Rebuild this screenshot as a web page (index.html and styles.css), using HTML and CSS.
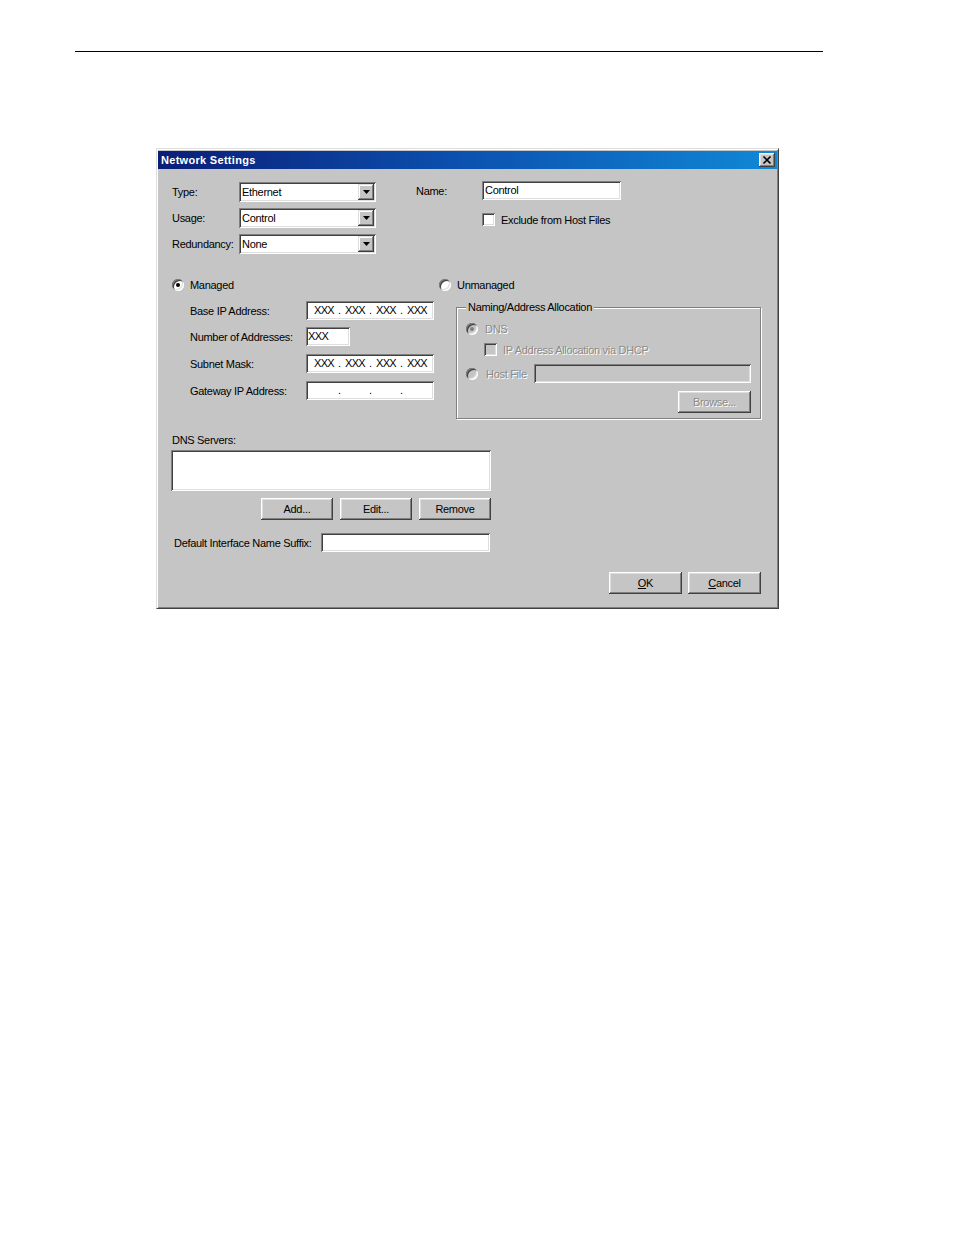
FILE: index.html
```html
<!DOCTYPE html>
<html>
<head>
<meta charset="utf-8">
<title>Network Settings</title>
<link rel="stylesheet" href="styles.css">
</head>
<body>
<div class="rule"></div>
<div class="dialog">
  <div class="titlebar">
    <span class="title">Network Settings</span>
    <span class="close"><svg width="16" height="14" viewBox="0 0 16 14"><path d="M4.5 3.5 L11.5 10.5 M11.5 3.5 L4.5 10.5" stroke="#000" stroke-width="1.7" fill="none"/></svg></span>
  </div>
  <div class="client">
    <div class="sec-top">
      <div class="col-left">
        <div class="row"><span class="lbl-a">Type:</span><div class="combo"><span class="val">Ethernet</span><span class="drop"><svg width="7" height="4" viewBox="0 0 7 4"><polygon points="0,0 7,0 3.5,4" fill="#000"/></svg></span></div></div>
        <div class="row"><span class="lbl-a">Usage:</span><div class="combo"><span class="val">Control</span><span class="drop"><svg width="7" height="4" viewBox="0 0 7 4"><polygon points="0,0 7,0 3.5,4" fill="#000"/></svg></span></div></div>
        <div class="row"><span class="lbl-a">Redundancy:</span><div class="combo"><span class="val">None</span><span class="drop"><svg width="7" height="4" viewBox="0 0 7 4"><polygon points="0,0 7,0 3.5,4" fill="#000"/></svg></span></div></div>
      </div>
      <div class="col-right">
        <div class="row name-row"><span class="lbl-b">Name:</span><div class="field name">Control</div></div>
        <div class="check-row"><span class="check"></span><span>Exclude from Host Files</span></div>
      </div>
    </div>

    <div class="sec-mid">
      <div class="col-managed">
        <div class="radio-row"><span class="radio on"></span><span>Managed</span></div>
        <div class="frow first"><span class="flbl">Base IP Address:</span><div class="field ip"><span class="g">XXX</span><span class="d">.</span><span class="g">XXX</span><span class="d">.</span><span class="g">XXX</span><span class="d">.</span><span class="g">XXX</span></div></div>
        <div class="frow n"><span class="flbl">Number of Addresses:</span><div class="field num"><span class="g">XXX</span></div></div>
        <div class="frow"><span class="flbl">Subnet Mask:</span><div class="field ip"><span class="g">XXX</span><span class="d">.</span><span class="g">XXX</span><span class="d">.</span><span class="g">XXX</span><span class="d">.</span><span class="g">XXX</span></div></div>
        <div class="frow"><span class="flbl">Gateway IP Address:</span><div class="field ip"><span class="g"></span><span class="d">.</span><span class="g"></span><span class="d">.</span><span class="g"></span><span class="d">.</span><span class="g"></span></div></div>
      </div>
      <div class="col-unmanaged">
        <div class="radio-row"><span class="radio"></span><span>Unmanaged</span></div>
        <fieldset class="group">
          <legend>Naming/Address Allocation</legend>
          <div class="radio-row g-dns"><span class="radio dis on"></span><span class="disabled">DNS</span></div>
          <div class="check-row g-dhcp"><span class="check dis"></span><span class="disabled">IP Address Allocation via DHCP</span></div>
          <div class="host-row"><span class="radio dis"></span><span class="disabled host-lbl">Host File</span><div class="field dis host"></div></div>
          <div class="browse-row"><span class="btn disabled">Browse...</span></div>
        </fieldset>
      </div>
    </div>

    <div class="sec-dns">
      <div class="dns-lbl">DNS Servers:</div>
      <div class="field listbox"></div>
      <div class="dns-btns"><span class="btn w72">Add...</span><span class="btn w72">Edit...</span><span class="btn w72">Remove</span></div>
    </div>

    <div class="suffix-row"><span>Default Interface Name Suffix:</span><div class="field suffix"></div></div>

    <div class="dlg-buttons"><span class="btn"><u>O</u>K</span><span class="btn"><u>C</u>ancel</span></div>
  </div>
</div>
</body>
</html>
```

FILE: styles.css
```css
* { box-sizing: border-box; }
body {
  margin: 0;
  background: #fff;
  font-family: "Liberation Sans", Arial, sans-serif;
  font-size: 11px;
  letter-spacing: -0.3px;
  color: #000;
}
.rule { margin: 51px 0 0 75px; width: 748px; height: 1px; background: #000; }

.dialog {
  margin: 96px 0 0 156px;
  width: 623px;
  height: 461px;
  background: #c5c5c5;
  border: 1px solid;
  border-color: #dedede #404040 #404040 #dedede;
  box-shadow: inset 1px 1px #fff, inset -1px -1px #808080;
  padding: 2px 1px 1px;
}
.titlebar {
  height: 18px;
  background: linear-gradient(90deg, #0a1e78 0%, #0c52b0 50%, #1088d6 100%);
  display: flex;
  align-items: center;
  justify-content: space-between;
  padding: 0 2px 0 3px;
}
.title { color: #fff; font-weight: bold; letter-spacing: 0.3px; line-height: 18px; }
.close {
  width: 16px; height: 14px; display: flex;
  background: #c5c5c5;
  box-shadow: inset -1px -1px #404040, inset 1px 1px #fff, inset -2px -2px #808080, inset 2px 2px #dedede;
}

/* sunken controls */
.field, .combo, .check, .radio {
  background: #fff;
  box-shadow: inset 1px 1px #808080, inset -1px -1px #fff, inset 2px 2px #404040, inset -2px -2px #dedede;
}
.field { height: 19px; line-height: 19px; }
.field.dis, .check.dis, .radio.dis { background: #c5c5c5; }

.btn {
  display: flex; align-items: center; justify-content: center;
  width: 73px; height: 22px;
  background: #c5c5c5;
  box-shadow: inset -1px -1px #404040, inset 1px 1px #fff, inset -2px -2px #808080, inset 2px 2px #dedede;
}
.btn.w72 { width: 72px; }
.disabled { color: #8a8a8a; text-shadow: 1px 1px 0 #fff; }

/* top section */
.sec-top { display: flex; margin: 13px 0 0 14px; }
.col-left { width: 244px; display: flex; flex-direction: column; gap: 6px; }
.row { display: flex; align-items: center; height: 20px; }
.lbl-a { width: 67px; }
.combo { width: 137px; height: 20px; display: flex; align-items: center; padding: 0 2px 0 3px; }
.combo .val { flex: 1; }
.drop {
  width: 16px; height: 16px; display: flex; align-items: center; justify-content: center;
  background: #c5c5c5;
  box-shadow: inset -1px -1px #404040, inset 1px 1px #dedede, inset -2px -2px #808080, inset 2px 2px #fff;
}
.col-right { margin-top: -1px; }
.name-row { height: 19px; }
.lbl-b { width: 66px; }
.field.name { width: 139px; padding-left: 3px; }
.check-row { display: flex; align-items: center; height: 13px; gap: 6px; }
.col-right .check-row { margin: 13px 0 0 66px; }
.check { width: 13px; height: 13px; flex: none; }

/* middle section */
.sec-mid { display: flex; margin: 25px 0 0 14px; }
.col-managed { width: 267px; }
.radio-row { display: flex; align-items: center; height: 12px; gap: 6px; }
.radio { width: 12px; height: 12px; border-radius: 50%; flex: none; display: flex; align-items: center; justify-content: center; }
.radio.on::after { content: ""; width: 4px; height: 4px; border-radius: 50%; background: #000; }
.radio.dis.on::after { background: #808080; }
.frow { display: flex; align-items: center; height: 19px; padding-left: 18px; margin-top: 8px; }
.frow.first { margin-top: 10px; }
.frow.n { margin-top: 7px; }
.flbl { width: 116px; }
.field.ip { width: 128px; display: flex; padding-left: 7px; }
.field.num { width: 44px; padding-left: 2px; }
.g { width: 22px; text-align: center; letter-spacing: -0.6px; }
.d { width: 9px; text-align: center; }
.field.num .g { display: inline-block; width: auto; }

.group {
  margin: 10px 0 0 17px;
  width: 305px;
  min-width: 0;
  border: 1px solid #808080;
  box-shadow: inset 1px 1px #fff, 1px 1px #fff;
  padding: 8px 9px 5px 9px;
}
.group legend { padding: 0 2px; line-height: 13px; background: #c5c5c5; }
.g-dns { height: 13px; gap: 7px; }
.g-dhcp { margin: 8px 0 0 18px; }
.host-row { display: flex; align-items: center; height: 19px; margin-top: 8px; }
.host-lbl { margin-left: 8px; }
.field.host { width: 217px; margin-left: auto; }
.browse-row { display: flex; justify-content: flex-end; margin-top: 8px; }

/* dns section */
.sec-dns { width: 320px; margin: 15px 0 0 13px; }
.dns-lbl { line-height: 13px; padding-left: 1px; }
.field.listbox { height: 41px; margin-top: 3px; }
.dns-btns { display: flex; justify-content: flex-end; gap: 7px; margin-top: 7px; }

.suffix-row { display: flex; align-items: center; width: 316px; height: 19px; margin: 13px 0 0 16px; }
.field.suffix { width: 169px; margin-left: auto; }

.dlg-buttons { display: flex; justify-content: flex-end; gap: 6px; margin-top: 20px; padding-right: 16px; }
```
